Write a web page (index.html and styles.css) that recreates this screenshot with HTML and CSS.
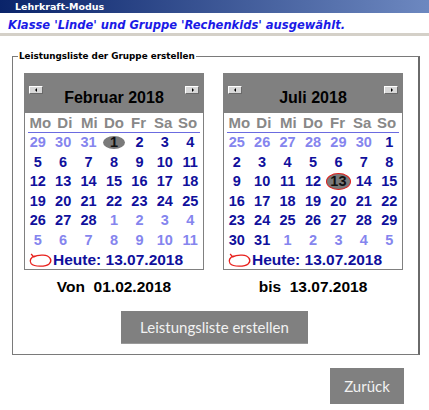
FILE: index.html
```html
<!DOCTYPE html>
<html>

<head>
    <meta charset='utf-8'>
    <title>Lehrkraft-Modus</title>
    <meta name='viewport' content='width=device-width, initial-scale=1'>
    <link rel="stylesheet" href="styles.css">
</head>

<body>
    <div class="titlebar">Lehrkraft-Modus</div>
    <div class="heading">Klasse 'Linde' und Gruppe 'Rechenkids' ausgewählt.</div>

    <fieldset class="group">
        <legend>Leistungsliste der Gruppe erstellen</legend>
        <div class="cal_row">
            <div class="cal_col">
                <div class="cal">
                    <div class="cal_head">
                        <button type="button" class="nav prev"></button>
                        <span class="month">Februar 2018</span>
                        <button type="button" class="nav next"></button>
                    </div>
                    <div class="weekdays">
                        <span>Mo</span><span>Di</span><span>Mi</span><span>Do</span><span>Fr</span><span>Sa</span><span>So</span>
                    </div>
                    <div class="days">
                        <span class="other">29</span><span class="other">30</span><span class="other">31</span><span><b class="sel">1</b></span><span>2</span><span>3</span><span>4</span>
                        <span>5</span><span>6</span><span>7</span><span>8</span><span>9</span><span>10</span><span>11</span>
                        <span>12</span><span>13</span><span>14</span><span>15</span><span>16</span><span>17</span><span>18</span>
                        <span>19</span><span>20</span><span>21</span><span>22</span><span>23</span><span>24</span><span>25</span>
                        <span>26</span><span>27</span><span>28</span><span class="other">1</span><span class="other">2</span><span class="other">3</span><span class="other">4</span>
                        <span class="other">5</span><span class="other">6</span><span class="other">7</span><span class="other">8</span><span class="other">9</span><span class="other">10</span><span class="other">11</span>
                    </div>
                    <div class="today_row">
                        <svg class="ring" width="25" height="16" viewBox="0 0 24 15">
                            <path d="M7 3.5 C2.5 4.5 1 8.5 3 11 C6 14.2 17 14.2 20.5 11 C23.5 8 21.5 3.2 14.5 2.8 C10.5 2.6 7.5 3.2 5.5 4.5 L3 1.8" fill="none" stroke="#e8201c" stroke-width="1.3"/>
                        </svg>
                        <span>Heute: 13.07.2018</span>
                    </div>
                </div>
                <div class="range">Von&nbsp;&nbsp;01.02.2018</div>
            </div>

            <div class="cal_col">
                <div class="cal">
                    <div class="cal_head">
                        <button type="button" class="nav prev"></button>
                        <span class="month">Juli 2018</span>
                        <button type="button" class="nav next"></button>
                    </div>
                    <div class="weekdays">
                        <span>Mo</span><span>Di</span><span>Mi</span><span>Do</span><span>Fr</span><span>Sa</span><span>So</span>
                    </div>
                    <div class="days">
                        <span class="other">25</span><span class="other">26</span><span class="other">27</span><span class="other">28</span><span class="other">29</span><span class="other">30</span><span>1</span>
                        <span>2</span><span>3</span><span>4</span><span>5</span><span>6</span><span>7</span><span>8</span>
                        <span>9</span><span>10</span><span>11</span><span>12</span><span><b class="sel today">13</b></span><span>14</span><span>15</span>
                        <span>16</span><span>17</span><span>18</span><span>19</span><span>20</span><span>21</span><span>22</span>
                        <span>23</span><span>24</span><span>25</span><span>26</span><span>27</span><span>28</span><span>29</span>
                        <span>30</span><span>31</span><span class="other">1</span><span class="other">2</span><span class="other">3</span><span class="other">4</span><span class="other">5</span>
                    </div>
                    <div class="today_row">
                        <svg class="ring" width="25" height="16" viewBox="0 0 24 15">
                            <path d="M7 3.5 C2.5 4.5 1 8.5 3 11 C6 14.2 17 14.2 20.5 11 C23.5 8 21.5 3.2 14.5 2.8 C10.5 2.6 7.5 3.2 5.5 4.5 L3 1.8" fill="none" stroke="#e8201c" stroke-width="1.3"/>
                        </svg>
                        <span>Heute: 13.07.2018</span>
                    </div>
                </div>
                <div class="range">bis&nbsp;&nbsp;13.07.2018</div>
            </div>
        </div>
        <button type="button" class="btn_list">Leistungsliste erstellen</button>
    </fieldset>

    <div class="footer">
        <button type="button" class="btn_back">Zurück</button>
    </div>
</body>

</html>
```

FILE: styles.css
```css
* {
    margin: 0;
    padding: 0;
    box-sizing: border-box;
}

body {
    width: 429px;
    height: 410px;
    overflow: hidden;
    background-color: white;
    font-family: "Liberation Sans", Arial, sans-serif;
}

.titlebar {
    height: 13px;
    padding-left: 15px;
    background: linear-gradient(to right, #0a246a, #6d88c0);
    color: white;
    font-family: "DejaVu Sans", sans-serif;
    font-size: 9.5px;
    font-weight: bold;
    line-height: 13px;
}

.heading {
    height: 23px;
    padding: 3px 0 0 8px;
    border-bottom: 3px solid #d4d0c8;
    color: #1a1ae6;
    font-family: "DejaVu Sans Condensed", "DejaVu Sans", sans-serif;
    font-stretch: condensed;
    font-size: 12.8px;
    font-weight: bold;
    font-style: italic;
    line-height: 18px;
}

.group {
    width: 408px;
    margin: 14px 0 0 12px;
    padding: 11px 0 10px 0;
    border: 1px solid #7a7a7a;
    border-right: 2px solid #6a6a6a;
}

.group legend {
    margin-left: 5px;
    padding: 0 1px;
    font-family: "DejaVu Sans", sans-serif;
    font-size: 8.8px;
    font-weight: bold;
    line-height: 12px;
}

.cal_row {
    display: flex;
    gap: 19px;
    padding-left: 11px;
}

.cal_col {
    width: 180px;
}

.cal {
    border: 1px solid #808080;
    background-color: white;
}

.cal_head {
    height: 39px;
    display: flex;
    align-items: flex-start;
    padding: 12px 4px 0 4px;
    background-color: #808080;
}

.month {
    flex: 1;
    text-align: center;
    font-size: 16px;
    font-weight: bold;
    line-height: 16px;
    margin-top: 4px;
}

.nav {
    width: 14px;
    height: 8px;
    background-color: #d8d8d8;
    border: 1px solid;
    border-color: #ffffff #6a6a6a #6a6a6a #ffffff;
    position: relative;
}

.nav::after {
    content: "";
    position: absolute;
    top: 1px;
    left: 5px;
    border: 2px solid transparent;
}

.prev::after {
    border-right-color: black;
    left: 3px;
}

.next::after {
    border-left-color: black;
    left: 6px;
}

.weekdays,
.days {
    display: grid;
    grid-template-columns: repeat(7, 1fr);
    text-align: center;
    font-weight: bold;
}

.weekdays {
    height: 20px;
    margin: 0 3px;
    border-bottom: 1px solid #6b6be0;
    color: #888888;
    font-size: 15px;
    line-height: 20px;
}

.days {
    grid-auto-rows: 19.5px;
    color: #10109c;
    font-size: 14.5px;
    line-height: 19.5px;
}

.days .other {
    color: #8585ee;
}

.days .sel {
    display: inline-block;
    width: 22px;
    height: 13px;
    margin-top: 3px;
    border-radius: 50%;
    background-color: #7a7a7a;
    color: #111111;
    line-height: 13px;
    position: relative;
}

.days .today {
    width: 25px;
    height: 17px;
    margin-top: 1px;
    border: 1px solid #e0201c;
    line-height: 15px;
}

.today_row {
    height: 19px;
    display: flex;
    align-items: center;
    padding-left: 3px;
    color: #10109c;
    font-size: 15.5px;
    font-weight: bold;
}

.range {
    margin-top: 9px;
    text-align: center;
    font-size: 15.5px;
    font-weight: bold;
    line-height: 16px;
}

.btn_list {
    display: block;
    width: 187px;
    height: 33px;
    margin: 16px 0 0 108px;
    background-color: #808080;
    border: none;
    border-bottom: 1px solid #9a9a9a;
    color: #f2f2f2;
    font-family: Lato, "Open Sans", sans-serif;
    font-size: 15px;
}

.footer {
    display: flex;
    justify-content: flex-end;
    padding: 13px 25px 0 0;
}

.btn_back {
    width: 74px;
    height: 36px;
    background-color: #808080;
    border: none;
    color: #f2f2f2;
    font-family: Lato, "Open Sans", sans-serif;
    font-size: 15px;
}
```
